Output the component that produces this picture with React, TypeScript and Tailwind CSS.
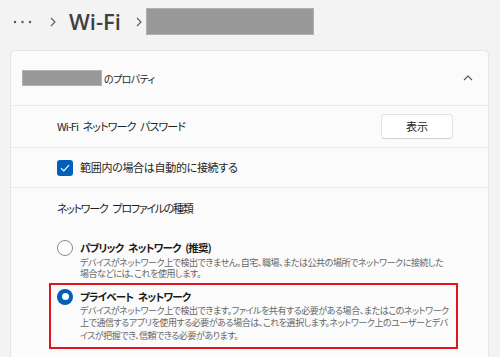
import React from 'react';

const jp = "font-['Noto_Sans_CJK_JP','Noto_Sans',sans-serif] [font-feature-settings:'palt']";

function Chevron({ className }: { className?: string }) {
  return (
    <svg width="6" height="10" viewBox="0 0 6 10" className={className}>
      <path d="M1 1 L5 5 L1 9" fill="none" stroke="#5a5a5a" strokeWidth="1.1" />
    </svg>
  );
}

function Radio({ checked }: { checked: boolean }) {
  if (checked) {
    return (
      <span className="flex h-[16px] w-[16px] shrink-0 items-center justify-center rounded-full bg-[#005fb8]">
        <span className="h-[7px] w-[7px] rounded-full bg-white" />
      </span>
    );
  }
  return <span className="h-[16px] w-[16px] shrink-0 rounded-full border border-[#8a8a8a] bg-white" />;
}

interface Option {
  label: string;
  lines: string[];
  checked: boolean;
}

const options: Option[] = [
  {
    label: 'パブリック ネットワーク (推奨)',
    lines: [
      'デバイスがネットワーク上で検出できません。自宅、職場、または公共の場所でネットワークに接続した',
      '場合などには、これを使用します。',
    ],
    checked: false,
  },
  {
    label: 'プライベート ネットワーク',
    lines: [
      'デバイスがネットワーク上で検出できます。ファイルを共有する必要がある場合、またはこのネットワーク',
      '上で通信するアプリを使用する必要がある場合は、これを選択します。ネットワーク上のユーザーとデバ',
      'イスが把握でき、信頼できる必要があります。',
    ],
    checked: true,
  },
];

export default function App() {
  return (
    <div className={`h-[357px] w-[500px] overflow-hidden bg-[#f3f3f3] ${jp}`}>
      {/* breadcrumb */}
      <div className="flex h-[50px] items-start pt-[8px]">
        <div className="flex h-[27px] items-center">
          <svg width="20" height="4" viewBox="0 0 20 4" className="ml-[13px]">
            <circle cx="2" cy="2" r="1.2" fill="#555" />
            <circle cx="9.5" cy="2" r="1.2" fill="#555" />
            <circle cx="17" cy="2" r="1.2" fill="#555" />
          </svg>
          <Chevron className="ml-[17px]" />
          <span className="ml-[13px] font-['Open_Sans',sans-serif] text-[22px] font-semibold leading-[27px] text-[#404040]">
            Wi-Fi
          </span>
          <Chevron className="ml-[15px]" />
          <div className="ml-[4px] h-[27px] w-[168px] border border-[#b0b0b0] bg-[#999999]" />
        </div>
      </div>

      {/* card */}
      <div className="ml-[10px] mr-[11px] h-[320px] rounded-[5px] border border-[#e5e5e5] bg-[#fbfbfb]">
        <div className="flex h-[55px] items-center border-b border-[#ebebeb] pl-[11px] pr-[15px]">
          <div className="h-[16px] w-[80px] border border-[#b0b0b0] bg-[#999999]" />
          <span className="ml-[2px] text-[10px] tracking-[-0.6px] text-[#1f1f1f]">のプロパティ</span>
          <svg width="10" height="6" viewBox="0 0 10 6" className="ml-auto">
            <path d="M1 5 L5 1 L9 5" fill="none" stroke="#555" strokeWidth="1.1" />
          </svg>
        </div>

        <div className="flex h-[42px] items-center justify-between border-b border-[#ebebeb] pl-[46px] pr-[35px]">
          <span className="text-[11px] tracking-[-0.9px] text-[#1f1f1f] [word-spacing:3px]">
            Wi-Fi ネットワーク パスワード
          </span>
          <button className="h-[25px] w-[72px] rounded-[4px] border border-[#e3e3e3] border-b-[#d2d2d2] bg-white text-[11px] text-[#1f1f1f]">
            表示
          </button>
        </div>

        <div className="flex h-[40px] items-center gap-[7px] border-b border-[#ebebeb] pl-[46px]">
          <span className="flex h-[16px] w-[16px] items-center justify-center rounded-[3px] bg-[#005fb8]">
            <svg width="10" height="8" viewBox="0 0 10 8">
              <path d="M1 4.2 L3.8 7 L9 1.2" fill="none" stroke="white" strokeWidth="1.2" />
            </svg>
          </span>
          <span className="text-[11px] tracking-[-0.3px] text-[#1f1f1f]">範囲内の場合は自動的に接続する</span>
        </div>

        <div className="pt-[12px]">
          <div className="pl-[46px] text-[11px] leading-[16px] tracking-[-1.3px] text-[#1f1f1f] [word-spacing:4px]">
            ネットワーク プロファイルの種類
          </div>
          <div className="mt-[18px] flex flex-col pl-[38px] pr-[30px]">
            {options.map((o, i) => (
              <div
                key={o.label}
                className={`border-2 pl-[6px] pt-[5px] ${
                  o.checked ? 'border-[#e3141e] pb-[4.5px]' : 'border-transparent pb-[1.5px]'
                }`}
              >
                <div className="flex h-[14px] items-center gap-[7px]">
                  <Radio checked={o.checked} />
                  <span className="text-[10.5px] font-bold leading-[14px] tracking-[-0.8px] text-[#1a1a1a] [word-spacing:3px]">
                    {o.label}
                  </span>
                </div>
                <div
                  className={`pl-[23px] text-[9px] tracking-[-0.45px] text-[#666666] ${
                    i === 0 ? 'mt-[2px] leading-[11px]' : 'mt-[1px] leading-[12.5px]'
                  }`}
                >
                  {o.lines.map((l) => (
                    <div key={l} className="whitespace-nowrap">
                      {l}
                    </div>
                  ))}
                </div>
              </div>
            ))}
          </div>
        </div>
      </div>
    </div>
  );
}
